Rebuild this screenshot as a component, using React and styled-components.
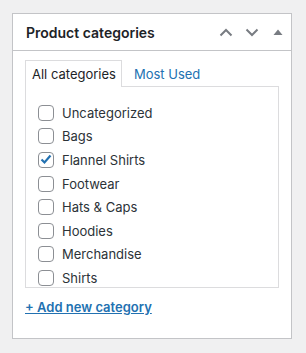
import React from "react";
import styled, { createGlobalStyle } from "styled-components";

const GlobalStyle = createGlobalStyle`
  html, body {
    margin: 0;
    padding: 0;
    background: #f0f0f1;
  }
  body {
    font-family: Inter, "Liberation Sans", Arial, sans-serif;
    color: #2c3338;
  }
  * {
    box-sizing: border-box;
  }
`;

const Page = styled.div`
  padding: 13px 14px 14px 12px;
`;

const Box = styled.div`
  width: 280px;
  background: #fff;
  border: 1px solid #c3c4c7;
`;

const Header = styled.div`
  display: flex;
  align-items: center;
  height: 37px;
  padding-left: 13px;
  border-bottom: 1px solid #c3c4c7;
`;

const Title = styled.h2`
  flex: 1;
  margin: 0;
  font-size: 14px;
  font-weight: 600;
  color: #1d2327;
`;

const IconButton = styled.button`
  display: flex;
  align-items: center;
  justify-content: center;
  width: 26px;
  height: 36px;
  padding: 0;
  border: 0;
  background: none;
  color: #787c82;
  cursor: pointer;
`;

const Inside = styled.div`
  padding: 9px 12px 22px;
`;

const Tabs = styled.ul`
  display: flex;
  margin: 0;
  padding: 0;
  list-style: none;
  position: relative;
  z-index: 1;
  margin-bottom: -1px;
`;

const Tab = styled.li`
  height: 27px;
  padding: 0 5px 0 6px;
  margin-right: 5px;
  font-size: 13px;
  line-height: 26px;
  color: ${(p) => (p.$active ? "#1d2327" : "#2271b1")};
  background: ${(p) => (p.$active ? "#fff" : "transparent")};
  border: 1px solid ${(p) => (p.$active ? "#dcdcde" : "transparent")};
  border-bottom: 0;
`;

const Panel = styled.div`
  height: 202px;
  overflow: hidden;
  padding: 14px 0 0 12px;
  border: 1px solid #dcdcde;
`;

const Row = styled.label`
  display: flex;
  align-items: center;
  gap: 8px;
  height: 23.6px;
  font-size: 13px;
`;

const Check = styled.span`
  display: flex;
  align-items: center;
  justify-content: center;
  width: 16px;
  height: 16px;
  border: 1px solid #8c8f94;
  border-radius: 4px;
  background: #fff;
  color: #2271b1;
`;

const AddLink = styled.a`
  display: inline-block;
  margin-top: 11px;
  font-size: 13px;
  font-weight: 600;
  color: #2271b1;
  text-decoration: underline;
`;

const categories = [
  { name: "Uncategorized" },
  { name: "Bags" },
  { name: "Flannel Shirts", checked: true },
  { name: "Footwear" },
  { name: "Hats & Caps" },
  { name: "Hoodies" },
  { name: "Merchandise" },
  { name: "Shirts" },
];

const ChevronUp = () => (
  <svg width="14" height="9" viewBox="0 0 14 9" fill="none">
    <path d="M1.5 7.5 L7 2 L12.5 7.5" stroke="currentColor" strokeWidth="2" />
  </svg>
);

const ChevronDown = () => (
  <svg width="14" height="9" viewBox="0 0 14 9" fill="none">
    <path d="M1.5 1.5 L7 7 L12.5 1.5" stroke="currentColor" strokeWidth="2" />
  </svg>
);

const Caret = () => (
  <svg width="10" height="6" viewBox="0 0 10 6">
    <path d="M0.5 6 L5 0.5 L9.5 6 Z" fill="currentColor" />
  </svg>
);

const Tick = () => (
  <svg width="12" height="11" viewBox="0 0 12 11" fill="none">
    <path d="M1.5 5.5 L4.5 8.5 L10.5 1.5" stroke="currentColor" strokeWidth="2.2" />
  </svg>
);

export default function App() {
  return (
    <>
      <GlobalStyle />
      <Page>
        <Box>
          <Header>
            <Title>Product categories</Title>
            <IconButton aria-label="Move up">
              <ChevronUp />
            </IconButton>
            <IconButton aria-label="Move down">
              <ChevronDown />
            </IconButton>
            <IconButton aria-label="Toggle panel">
              <Caret />
            </IconButton>
          </Header>
          <Inside>
            <Tabs>
              <Tab $active>All categories</Tab>
              <Tab>Most Used</Tab>
            </Tabs>
            <Panel>
              {categories.map((c) => (
                <Row key={c.name}>
                  <Check>{c.checked && <Tick />}</Check>
                  {c.name}
                </Row>
              ))}
            </Panel>
            <AddLink href="#">+ Add new category</AddLink>
          </Inside>
        </Box>
      </Page>
    </>
  );
}
